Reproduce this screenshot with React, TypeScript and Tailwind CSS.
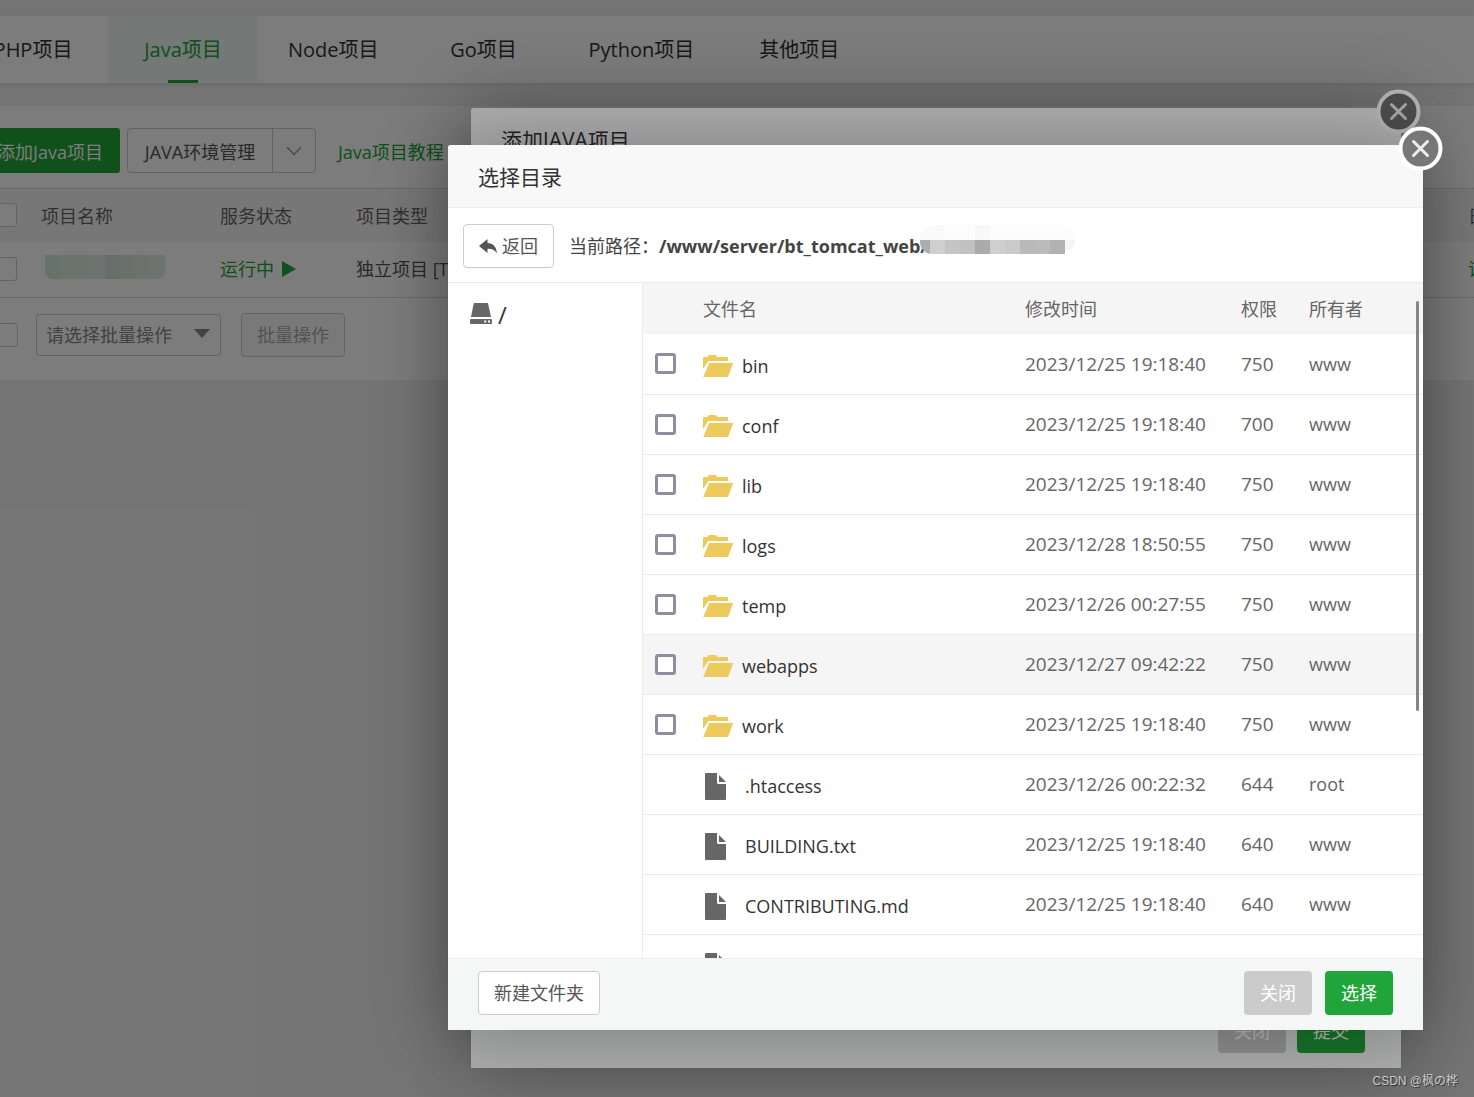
import type { ReactNode } from "react";

interface FileRow {
  name: string;
  time: string;
  mode: string;
  owner: string;
  dir?: boolean;
  active?: boolean;
}

const tabs = ["PHP项目", "Java项目", "Node项目", "Go项目", "Python项目", "其他项目"];

const files: FileRow[] = [
  { name: "bin", time: "2023/12/25 19:18:40", mode: "750", owner: "www", dir: true },
  { name: "conf", time: "2023/12/25 19:18:40", mode: "700", owner: "www", dir: true },
  { name: "lib", time: "2023/12/25 19:18:40", mode: "750", owner: "www", dir: true },
  { name: "logs", time: "2023/12/28 18:50:55", mode: "750", owner: "www", dir: true },
  { name: "temp", time: "2023/12/26 00:27:55", mode: "750", owner: "www", dir: true },
  { name: "webapps", time: "2023/12/27 09:42:22", mode: "750", owner: "www", dir: true, active: true },
  { name: "work", time: "2023/12/25 19:18:40", mode: "750", owner: "www", dir: true },
  { name: ".htaccess", time: "2023/12/26 00:22:32", mode: "644", owner: "root" },
  { name: "BUILDING.txt", time: "2023/12/25 19:18:40", mode: "640", owner: "www" },
  { name: "CONTRIBUTING.md", time: "2023/12/25 19:18:40", mode: "640", owner: "www" },
  { name: "", time: "", mode: "", owner: "" },
];

const FolderIcon = () => (
  <svg viewBox="0 0 30 22" className="h-[22px] w-[30px] shrink-0 fill-[#edca5c]">
    <path d="M0 14V3.2Q0 2 1.2 2H5V1.200Q5.500 0 6.500 0H12.500Q13.800 0 14.200 2H25V6H6.200Q5 6 4.500 7.200Z" />
    <path d="M6 8H30.200L25 22H.3Z" />
  </svg>
);

const FileIcon = () => (
  <svg viewBox="0 0 21 27" className="h-[27px] w-[21px] shrink-0 fill-[#666]">
    <path d="M0 1Q0 0 1 0H12V9.500Q12 11 13.500 11H21V26Q21 27 20 27H1Q0 27 0 26Z" />
    <path d="M14 2L21 9H14Z" />
  </svg>
);

const DiskIcon = () => (
  <svg viewBox="0 0 22 21" className="h-[21px] w-[22px] fill-[#666]">
    <path d="M4.500 0H17.200Q18 0 18.200 1L21 14H1L3.600 1Q3.800 0 4.500 0Z" />
    <path fillRule="evenodd" d="M1 16H21Q22 16 22 17V20Q22 21 21 21H1Q0 21 0 20V17Q0 16 1 16ZM14.200 17.500V19.500H16.200V17.500ZM18 17.500V19.500H20V17.500Z" />
  </svg>
);

const BackIcon = () => (
  <svg viewBox="0 0 18 15" className="h-[15px] w-[18px] fill-[#555]">
    <path d="M0 7L8.500 0V4C14 4 17.500 8 18 14.500C16 11 13 9.800 8.500 9.800V14Z" />
  </svg>
);

const CloseButton = ({ fill }: { fill: string }) => (
  <button aria-label="关闭" className="absolute -top-[19px] -right-5 size-[45px]">
    <svg viewBox="0 0 45 45" className="size-[45px]" fill="none">
      <circle cx="22.5" cy="22.5" r="20" fill={fill} stroke="#fff" strokeWidth="4" />
      <path d="M15.500 15.500L29.500 29.500M29.500 15.500L15.500 29.500" stroke="#eee" strokeWidth="3" strokeLinecap="round" />
    </svg>
  </button>
);

const Checkbox = ({ label }: { label: string }) => (
  <input type="checkbox" aria-label={label} className="block size-6 appearance-none rounded-[3px] border border-[#ccc] bg-white" />
);

const Mask = () => <div className="absolute inset-0 bg-black/30" />;

const Dialog = ({ className, children }: { className: string; children: ReactNode }) => (
  <section className={`absolute flex flex-col rounded-t-[3px] bg-white shadow-[1px_1px_75px_rgba(0,0,0,0.3)] ${className}`}>
    {children}
  </section>
);

const DialogTitle = ({ children }: { children: ReactNode }) => (
  <h2 className="h-[63px] shrink-0 rounded-t-[3px] border-b border-[#eee] bg-[#f8f8f8] px-[30px] text-[21px] leading-[64px] text-[#333]">
    {children}
  </h2>
);

const topCells = ["bg-[#fafafa]", "bg-[#fafafa]", "bg-[#fcfcfc]", "bg-[#fcfcfc]", "bg-[#f8f8f8]", "bg-[#fcfcfc]", "bg-[#fcfcfc]", "bg-[#fcfcfc]", "bg-[#fcfcfc]", "bg-[#fcfcfc]"];
const darkCells = ["bg-[#acacac]", "bg-[#cfcfcf]", "bg-[#c5c5c5]", "bg-[#c1c1c1]", "bg-[#ababab]", "bg-[#cfcfcf]", "bg-[#cacaca]", "bg-[#b9b9b9]", "bg-[#bbbbbb]", "bg-[#b2b2b2]"];
const nameCells = ["bg-[#d5ebd9]", "bg-[#dcedde]", "bg-[#dcecdf]", "bg-[#e3ebe9]", "bg-[#d6e6d8]", "bg-[#dbeadd]", "bg-[#e0ebe1]", "bg-[#e0ece2]"];

const ProjectPage = () => (
  <div className="pt-4">
    <nav className="relative -ml-[42px] flex h-[67px] bg-white shadow-[0_2px_6px_rgba(0,0,0,0.1)]">
      {tabs.map((tab) => (
        <button
          key={tab}
          className={
            tab === "Java项目"
              ? "relative min-w-[150px] bg-[#eef6f3] px-[30px] text-xl text-[#20a53a] after:absolute after:bottom-0 after:left-[60px] after:h-[3px] after:w-[30px] after:bg-[#20a53a]"
              : "min-w-[150px] px-[30px] text-xl text-[#333]"
          }
        >
          {tab}
        </button>
      ))}
    </nav>

    <main className="mt-[23px] -mr-16 -ml-5 bg-white text-lg">
      <div className="flex h-[82px] items-start pt-[22px]">
        <button className="h-[45px] w-[140px] rounded-[3px] bg-[#20a53a] pt-0.5 text-white">添加Java项目</button>
        <div className="ml-[7px] flex h-[45px] w-[189px] rounded-[4px] border border-[#ccc] text-[#555]">
          <button className="flex-1 border-r border-[#ccc] pt-0.5">JAVA环境管理</button>
          <button aria-label="更多" className="flex w-[42px] items-center justify-center">
            <svg viewBox="0 0 16 10" className="h-[10px] w-4" fill="none" stroke="#999" strokeWidth="1.500">
              <path d="M1 1L8 8.500L15 1" />
            </svg>
          </button>
        </div>
        <a href="#tutorial" className="ml-[22px] pt-0.5 leading-[45px] text-[#20a53a]">Java项目教程</a>
      </div>

      <table className="w-full table-fixed border-y border-[#d8d8d8] text-left">
        <colgroup>
          <col className="w-[61px]" />
          <col className="w-[179px]" />
          <col className="w-[136px]" />
          <col />
          <col className="w-[70px]" />
        </colgroup>
        <thead className="bg-[#f5f5f5] text-[#666]">
          <tr className="h-[53px]">
            <th className="pl-[13px]"><Checkbox label="全选" /></th>
            <th className="pt-0.5 font-normal">项目名称</th>
            <th className="pt-0.5 font-normal">服务状态</th>
            <th className="pt-0.5 font-normal">项目类型</th>
            <th className="pt-0.5 font-normal">日志</th>
          </tr>
        </thead>
        <tbody>
          <tr className="h-14 text-[#555]">
            <td className="pl-[13px]"><Checkbox label="选择项目" /></td>
            <td>
              <div className="mb-1 ml-1 flex h-6 w-[120px] overflow-hidden rounded-b-lg">
                {nameCells.map((cell, i) => (
                  <span key={i} className={`flex-1 ${cell}`} />
                ))}
              </div>
            </td>
            <td className="text-[#20a53a]">
              <span className="flex items-center gap-2">
                运行中
                <svg viewBox="0 0 14 16" className="h-4 w-[14px] fill-[#20a53a]"><path d="M0 0L14 8L0 16Z" /></svg>
              </span>
            </td>
            <td>独立项目 [Tomcat]</td>
            <td className="text-[#20a53a]">详情</td>
          </tr>
        </tbody>
      </table>

      <div className="flex h-[82px] items-center pb-2 pl-[14px]">
        <Checkbox label="批量选择" />
        <div className="relative ml-[18px]">
          <select aria-label="批量操作类型" className="h-[42px] w-[185px] appearance-none rounded-[3px] border border-[#ccc] pl-[9px] text-[#888]">
            <option>请选择批量操作</option>
          </select>
          <svg viewBox="0 0 16 9" className="pointer-events-none absolute top-[15px] right-[11px] h-[9px] w-4 fill-[#888]"><path d="M0 0H16L8 9Z" /></svg>
        </div>
        <button className="ml-5 h-11 w-[104px] rounded-[4px] border border-[#ccc] bg-[#fafafa] text-[#aaa]">批量操作</button>
      </div>
    </main>
  </div>
);

const FileTable = () => (
  <table className="w-full table-fixed text-left text-lg">
    <colgroup>
      <col className="w-[60px]" />
      <col className="w-[322px]" />
      <col className="w-[216px]" />
      <col className="w-[68px]" />
      <col />
    </colgroup>
    <thead className="bg-[#f5f5f5] text-[#666]">
      <tr className="h-[51px]">
        <th />
        <th className="font-normal">文件名</th>
        <th className="font-normal">修改时间</th>
        <th className="font-normal">权限</th>
        <th className="font-normal">所有者</th>
      </tr>
    </thead>
    <tbody>
      {files.map((file) => (
        <tr
          key={file.name}
          className={file.active ? "h-[60px] border-b border-[#ebebeb] bg-[#f5f5f5]" : "h-[60px] border-b border-[#ebebeb]"}
        >
          <td className="pl-3">
            {file.dir && (
              <input
                type="checkbox"
                aria-label={file.name}
                className="block size-[21px] appearance-none rounded-[3px] border-3 border-[#908e9e] bg-white"
              />
            )}
          </td>
          <td className="text-[#333]">
            <span className="flex items-center pt-1">
              {file.dir ? (
                <>
                  <FolderIcon />
                  <span className="pl-[9px]">{file.name}</span>
                </>
              ) : (
                <>
                  <span className="pl-[2px]"><FileIcon /></span>
                  <span className="pl-[19px]">{file.name}</span>
                </>
              )}
            </span>
          </td>
          <td className="pt-0.5 text-[19px] text-[#666]">{file.time}</td>
          <td className="pt-0.5 text-[19px] text-[#666]">{file.mode}</td>
          <td className="text-[#666]">{file.owner}</td>
        </tr>
      ))}
    </tbody>
  </table>
);

export default function App() {
  return (
    <div className="relative min-h-screen overflow-hidden bg-[#f0f0f0] font-['Open_Sans','Noto_Sans_CJK_SC',sans-serif]">
      <ProjectPage />
      <Mask />

      <Dialog className="top-[108px] right-[73px] h-[960px] w-[930px]">
        <DialogTitle>添加JAVA项目</DialogTitle>
        <div className="flex-1" />
        <footer className="flex h-[72px] items-center justify-end gap-[11px] bg-[#f5f7f7] px-9 pb-0.5 text-lg text-white">
          <button className="h-11 w-[68px] rounded-[4px] bg-[#cbcbcb]">关闭</button>
          <button className="h-11 w-[68px] rounded-[4px] bg-[#20a53a]">提交</button>
        </footer>
        <CloseButton fill="#6e6e6e" />
      </Dialog>
      <Mask />

      <Dialog className="top-[145px] right-[51px] w-[975px]">
        <DialogTitle>选择目录</DialogTitle>
        <div className="flex h-[75px] items-center border-b border-[#ebebeb] pt-0.5 pl-[15px] text-lg text-[#444]">
          <button className="flex h-11 w-[91px] items-center justify-center gap-[5px] rounded-[4px] border border-[#ccc] text-[#555]">
            <BackIcon />
            返回
          </button>
          <span className="ml-[15px]">当前路径：</span>
          <strong className="relative font-bold">
            /www/server/bt_tomcat_web/
            <span className="absolute top-0 -right-[136px]">/</span>
            <span className="absolute -top-[7px] -right-[147px] flex w-[155px] flex-col">
              <span className="flex h-[15px] overflow-hidden rounded-t-full bg-[#fcfcfc]">
                {topCells.map((cell, i) => (
                  <span key={i} className={`w-[15px] first:w-[10px] ${cell}`} />
                ))}
              </span>
              <span className="flex h-[14px] overflow-hidden rounded-b-xl">
                {darkCells.map((cell, i) => (
                  <span key={i} className={`w-[15px] first:w-[10px] ${cell}`} />
                ))}
                <span className="h-[10px] w-[10px] rounded-br-lg bg-[#f5f5f5]" />
              </span>
            </span>
          </strong>
        </div>
        <div className="flex h-[675px]">
          <aside className="flex w-[195px] items-start border-r border-[#ebebeb] pt-5 pl-[22px]">
            <DiskIcon />
            <span className="pl-[6px] text-2xl leading-6 text-[#333]">/</span>
          </aside>
          <div className="relative flex-1 overflow-hidden">
            <FileTable />
            <div className="absolute top-[18px] right-1 h-[410px] w-[3px] rounded-full bg-[#858585]" />
          </div>
        </div>
        <footer className="flex h-[72px] items-center border-t border-[#ebeeee] bg-[#f5f7f7] px-[30px] pb-1 text-lg">
          <button className="h-11 w-[122px] rounded-[4px] border border-[#ccc] bg-white text-[#555]">新建文件夹</button>
          <button className="ml-auto h-11 w-[68px] rounded-[4px] bg-[#cbcbcb] text-white">关闭</button>
          <button className="ml-[13px] h-11 w-[68px] rounded-[4px] bg-[#20a53a] text-white">选择</button>
        </footer>
        <CloseButton fill="#777" />
      </Dialog>

      <span className="absolute right-4 bottom-2 font-['Liberation_Sans','Noto_Sans_CJK_SC',sans-serif] text-xs text-[#ccc] [text-shadow:1px_1px_1px_rgba(0,0,0,0.6)]">
        CSDN @枫の桦
      </span>
    </div>
  );
}
